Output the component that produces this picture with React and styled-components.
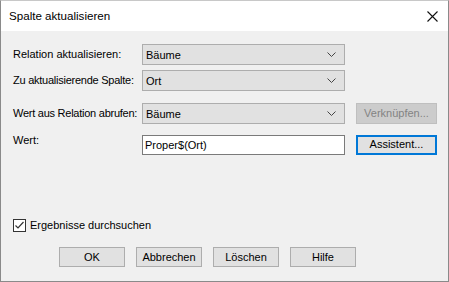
import styled, { createGlobalStyle } from "styled-components"

const Global = createGlobalStyle`
    html, body {
        margin: 0;
        padding: 0;
        background: #f0f0f0;
    }
    * {
        box-sizing: border-box;
    }
`

const Chevron = () => (
    <svg width="9" height="5" viewBox="0 0 9 5">
        <path d="M0.5 0.5 L4.5 4.5 L8.5 0.5" fill="none" stroke="#444" strokeWidth="1" />
    </svg>
)

const App = () => {
    return (
        <>
        <Global />
        <Window>
            <TitleBar>
                <Title>Spalte aktualisieren</Title>
                <CloseBtn>
                    <svg width="11" height="11" viewBox="0 0 11 11">
                        <path d="M0.5 0.5 L10.5 10.5 M10.5 0.5 L0.5 10.5" stroke="#111" strokeWidth="1.1" />
                    </svg>
                </CloseBtn>
            </TitleBar>
            <Body>
                <Row>
                    <Label>Relation aktualisieren:</Label>
                    <Combo><span>Bäume</span><Chevron /></Combo>
                </Row>
                <Row $top={5}>
                    <Label $tight>Zu aktualisierende Spalte:</Label>
                    <Combo><span>Ort</span><Chevron /></Combo>
                </Row>
                <Row $top={12}>
                    <Label $tight>Wert aus Relation abrufen:</Label>
                    <Combo><span>Bäume</span><Chevron /></Combo>
                    <Button disabled>Verknüpfen...</Button>
                </Row>
                <Row $top={10}>
                    <Label $alignTop>Wert:</Label>
                    <TextBox>Proper$(Ort)</TextBox>
                    <Button $focused>Assistent...</Button>
                </Row>
                <Check>
                    <Box>
                        <svg width="11" height="11" viewBox="0 0 11 11">
                            <path d="M1.5 5.5 L4 8 L9.5 2" fill="none" stroke="#333" strokeWidth="1.2" />
                        </svg>
                    </Box>
                    Ergebnisse durchsuchen
                </Check>
                <Buttons>
                    <Button>OK</Button>
                    <Button>Abbrechen</Button>
                    <Button>Löschen</Button>
                    <Button>Hilfe</Button>
                </Buttons>
            </Body>
        </Window>
        </>
    )
}

const Window = styled.div`
    width: 449px;
    height: 282px;
    display: flex;
    flex-direction: column;
    border: 1px solid #8a8a8a;
    border-top-color: #c8c8c8;
    background: #f0f0f0;
    font-family: "Liberation Sans", Arial, sans-serif;
    font-size: 11px;
    color: #000;
`

const TitleBar = styled.div`
    height: 30px;
    background: #fff;
    display: flex;
    align-items: center;
    justify-content: space-between;
    padding: 0 9px 0 8px;
`

const Title = styled.div`
    font-size: 11.6px;
    padding-bottom: 1px;
`

const CloseBtn = styled.div`
    display: flex;
    align-items: center;
    padding-right: 1px;
`

const Body = styled.div`
    flex: 1;
    display: flex;
    flex-direction: column;
    padding: 13px 0 0 12px;
`

const Button = styled.div`
    height: ${p => p.disabled ? 21 : 20}px;
    width: ${p => p.disabled || p.$focused ? 81 : 66}px;
    border: ${p => p.$focused ? "2px solid #0078d7" : p.disabled ? "1px solid #bfbfbf" : "1px solid #adadad"};
    background: ${p => p.disabled ? "#cccccc" : "#e1e1e1"};
    color: ${p => p.disabled ? "#838383" : "#000"};
    display: flex;
    align-items: center;
    justify-content: center;
    padding-bottom: 1px;
`

const Row = styled.div`
    display: grid;
    grid-template-columns: 129px 203px 11px 81px;
    height: 21px;
    margin-top: ${p => p.$top || 0}px;
    align-items: center;

    ${Button} {
        grid-column: 4;
    }
`

const Label = styled.div`
    white-space: nowrap;
    align-self: ${p => p.$alignTop ? "start" : "center"};
    letter-spacing: ${p => p.$tight ? "-0.25px" : "0"};
    padding-bottom: 1px;
`

const Combo = styled.div`
    height: 21px;
    border: 1px solid #adadad;
    background: #e1e1e1;
    display: flex;
    align-items: center;
    justify-content: space-between;
    padding: 0 8px 0 3px;
`

const TextBox = styled.div`
    height: 20px;
    border: 1px solid #7a7a7a;
    background: #fff;
    display: flex;
    align-items: center;
    padding: 0 2px;
`

const Check = styled.div`
    display: flex;
    align-items: center;
    gap: 4px;
    margin-top: 63px;
    height: 14px;
`

const Box = styled.div`
    width: 13px;
    height: 13px;
    border: 1px solid #333;
    background: #fff;
    display: flex;
    align-items: center;
    justify-content: center;
`

const Buttons = styled.div`
    display: flex;
    gap: 11px;
    margin-top: 15px;
    padding-left: 46px;
`

export default App
